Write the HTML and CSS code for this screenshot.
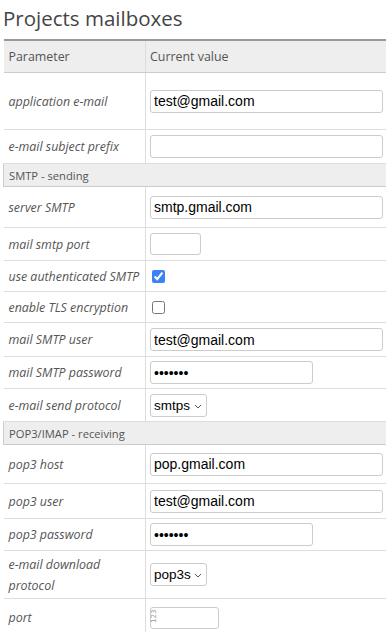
FILE: index.html
```html
<!DOCTYPE html>
<html lang="en">
<head>
  <meta charset="UTF-8">
  <title>Projects mailboxes</title>
  <link rel="stylesheet" href="styles.css">
</head>
<body>
  <h2 class="page-title">Projects mailboxes</h2>

  <table class="params">
    <colgroup>
      <col class="col-name">
      <col class="col-value">
    </colgroup>
    <thead>
      <tr class="head-row">
        <th>Parameter</th>
        <th>Current value</th>
      </tr>
    </thead>
    <tbody>
      <tr class="h57">
        <td class="name">application e-mail</td>
        <td><input type="text" class="field field-wide" value="test@gmail.com"></td>
      </tr>
      <tr class="h34">
        <td class="name">e-mail subject prefix</td>
        <td><input type="text" class="field field-wide" value=""></td>
      </tr>

      <!-- SMTP -->
      <tr class="section">
        <td colspan="2">SMTP - sending</td>
      </tr>
      <tr class="h41">
        <td class="name">server SMTP</td>
        <td><input type="text" class="field field-wide" value="smtp.gmail.com"></td>
      </tr>
      <tr class="h33">
        <td class="name">mail smtp port</td>
        <td><input type="text" class="field field-tiny" value=""></td>
      </tr>
      <tr class="h31">
        <td class="name">use authenticated SMTP</td>
        <td><input type="checkbox" class="check" checked></td>
      </tr>
      <tr class="h31">
        <td class="name">enable TLS encryption</td>
        <td><input type="checkbox" class="check"></td>
      </tr>
      <tr class="h34">
        <td class="name">mail SMTP user</td>
        <td><input type="text" class="field field-wide" value="test@gmail.com"></td>
      </tr>
      <tr class="h32">
        <td class="name">mail SMTP password</td>
        <td><input type="password" class="field field-mid" value="1234567"></td>
      </tr>
      <tr class="h33">
        <td class="name">e-mail send protocol</td>
        <td>
          <span class="select-wrap">
            <select class="select"><option>smtps</option></select>
            <svg class="chevron" width="8" height="5" viewBox="0 0 8 5"><path d="M1 1l3 3 3-3" fill="none" stroke="#555" stroke-width="1"/></svg>
          </span>
        </td>
      </tr>

      <!-- POP3 / IMAP -->
      <tr class="section">
        <td colspan="2">POP3/IMAP - receiving</td>
      </tr>
      <tr class="h39">
        <td class="name">pop3 host</td>
        <td><input type="text" class="field field-wide" value="pop.gmail.com"></td>
      </tr>
      <tr class="h35">
        <td class="name">pop3 user</td>
        <td><input type="text" class="field field-wide" value="test@gmail.com"></td>
      </tr>
      <tr class="h32">
        <td class="name">pop3 password</td>
        <td><input type="password" class="field field-mid" value="1234567"></td>
      </tr>
      <tr class="h48">
        <td class="name">e-mail download protocol</td>
        <td>
          <span class="select-wrap">
            <select class="select"><option>pop3s</option></select>
            <svg class="chevron" width="8" height="5" viewBox="0 0 8 5"><path d="M1 1l3 3 3-3" fill="none" stroke="#555" stroke-width="1"/></svg>
          </span>
        </td>
      </tr>
      <tr class="h38">
        <td class="name">port</td>
        <td>
          <span class="number-wrap">
            <input type="text" class="field field-short" value="">
            <span class="spin-hint">123</span>
          </span>
        </td>
      </tr>
    </tbody>
  </table>
</body>
</html>
```

FILE: styles.css
```css
/* page */
body {
  margin: 0;
  padding: 0 0 0 3px;
  font-family: 'Open Sans', sans-serif;
  color: #555555;
  background: #ffffff;
  overflow: hidden;
}

.page-title {
  margin: 0;
  padding: 4px 0 0 0;
  height: 35px;
  font-size: 20.5px;
  font-weight: 400;
  color: #444444;
  line-height: 28px;
}

/* table */
.params {
  width: 390px;
  border-collapse: collapse;
  table-layout: fixed;
  border-top: 2px solid #999999;
  font-size: 12.4px;
}

.col-name {
  width: 142px;
}

.params th,
.params td {
  border-bottom: 1px solid #dddddd;
  padding: 0 4px;
  vertical-align: middle;
  text-align: left;
}

.params th:first-child,
.params td.name {
  border-right: 1px solid #dddddd;
  padding-left: 5px;
  padding-right: 1px;
}

.head-row th {
  height: 31px;
  background: #eeeeee;
  border-bottom: 1px solid #cccccc;
  font-weight: 400;
  color: #555555;
}

.name {
  font-style: italic;
  color: #555555;
  line-height: 21px;
}

/* section rows */
.section td {
  height: 22px;
  background: #eeeeee;
  border: 1px solid #cccccc;
  border-right: none;
  padding-left: 5px;
  font-size: 11.2px;
  color: #555555;
}

/* row heights */
.h31 td { height: 30px; }
.h32 td { height: 31px; }
.h33 td { height: 32px; }
.h34 td { height: 33px; }
.h35 td { height: 34px; }
.h38 td { height: 37px; }
.h39 td { height: 38px; }
.h41 td { height: 40px; }
.h48 td { height: 47px; }
.h57 td { height: 56px; }

/* inputs */
.field {
  display: block;
  box-sizing: border-box;
  height: 23px;
  padding: 1px 3px;
  border: 1px solid #cccccc;
  border-radius: 3px;
  font-family: 'Liberation Sans', Arial, sans-serif;
  font-size: 14px;
  color: #000000;
  background: #ffffff;
  outline: none;
}

.field-wide {
  width: 233px;
}

.field-mid {
  width: 163px;
}

.field-tiny {
  width: 51px;
  height: 22px;
}

.field-short {
  width: 69px;
  height: 22px;
}

.check {
  display: block;
  width: 13px;
  height: 13px;
  margin: 0 0 0 2px;
  accent-color: #3a82f7;
}

/* select */
.select-wrap {
  position: relative;
  display: inline-block;
  vertical-align: middle;
}

.select {
  display: block;
  box-sizing: border-box;
  width: 57px;
  height: 23px;
  padding: 0 14px 0 3px;
  border: 1px solid #cccccc;
  border-radius: 3px;
  background: #ffffff;
  font-family: 'Liberation Sans', Arial, sans-serif;
  font-size: 13.5px;
  color: #000000;
  appearance: none;
  -webkit-appearance: none;
}

.chevron {
  position: absolute;
  right: 5px;
  top: 10px;
}

/* number input placeholder */
.number-wrap {
  position: relative;
  display: inline-block;
  vertical-align: middle;
}

.spin-hint {
  position: absolute;
  left: 0;
  top: 16px;
  font-family: 'DejaVu Sans', sans-serif;
  font-size: 7px;
  line-height: 8px;
  color: #999999;
  transform: rotate(-90deg);
  transform-origin: 0 0;
}
```
